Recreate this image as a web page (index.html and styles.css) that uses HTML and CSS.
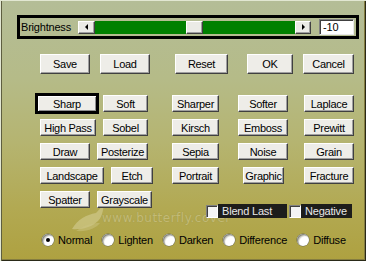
FILE: index.html
```html
<!DOCTYPE html>
<html>
<head>
<meta charset="utf-8">
<link rel="stylesheet" href="styles.css">
</head>
<body>
<div class="win">
  <div class="watermark">
    <svg class="leaf" width="40" height="30" viewBox="0 0 40 30">
      <path d="M2 26 C8 16 16 12 26 10 C30 6 33 2 34 1 C33 8 32 14 28 18 C22 24 12 27 2 26 Z" fill="#d4cd92" opacity="0.6"/>
      <path d="M6 28 C14 22 22 20 30 20 C26 25 18 29 6 28 Z" fill="#cbc382" opacity="0.5"/>
    </svg>
    <span class="wm-text">www.butterfly.cover</span>
  </div>

  <div class="bright">
    <span class="blabel">Brightness</span>
    <div class="scroll">
      <div class="arrow a-left"><span class="tri-left"></span></div>
      <div class="track">
        <div class="fill f-left"></div>
        <div class="thumb"></div>
        <div class="fill"></div>
      </div>
      <div class="arrow a-right"><span class="tri-right"></span></div>
    </div>
    <div class="tbox">-10</div>
  </div>

  <div class="actions">
    <button class="btn tall w50">Save</button>
    <button class="btn tall w50 m10">Load</button>
    <button class="btn tall w53 m25">Reset</button>
    <button class="btn tall w46 m19">OK</button>
    <button class="btn tall w51 m10">Cancel</button>
  </div>

  <div class="filters">
    <button class="btn focus w64 mneg5">Sharp</button>
    <button class="btn w45 m6">Soft</button>
    <button class="btn w47">Sharper</button>
    <button class="btn w50">Softer</button>
    <button class="btn w50">Laplace</button>

    <button class="btn w56">High Pass</button>
    <button class="btn w45 m6">Sobel</button>
    <button class="btn w47">Kirsch</button>
    <button class="btn w50">Emboss</button>
    <button class="btn w50">Prewitt</button>

    <button class="btn w50">Draw</button>
    <button class="btn w51">Posterize</button>
    <button class="btn w47">Sepia</button>
    <button class="btn w50">Noise</button>
    <button class="btn w50">Grain</button>

    <button class="btn w64">Landscape</button>
    <button class="btn w42 m14">Etch</button>
    <button class="btn w47">Portrait</button>
    <button class="btn w41 m5">Graphic</button>
    <button class="btn w50">Fracture</button>

    <button class="btn w50">Spatter</button>
    <button class="btn w55">Grayscale</button>
  </div>

  <div class="checks">
    <span class="cbox"></span><span class="strip s-blend">Blend Last</span>
    <span class="cbox c2"></span><span class="strip s-neg">Negative</span>
  </div>

  <div class="modes">
    <span class="mode"><span class="radio on"></span>Normal</span>
    <span class="mode"><span class="radio"></span>Lighten</span>
    <span class="mode"><span class="radio"></span>Darken</span>
    <span class="mode"><span class="radio"></span>Difference</span>
    <span class="mode"><span class="radio"></span>Diffuse</span>
  </div>
</div>
</body>
</html>
```

FILE: styles.css
```css
html, body {
  margin: 0;
  padding: 0;
}
body {
  width: 366px;
  height: 261px;
  overflow: hidden;
  font-family: "Liberation Sans", Arial, sans-serif;
  font-size: 11px;
  letter-spacing: -0.2px;
  color: #000;
}
.win {
  position: relative;
  z-index: 0;
  box-sizing: border-box;
  width: 366px;
  height: 261px;
  padding-top: 15px;
  background: linear-gradient(180deg, #b4bd97 0%, #b5bb88 30%, #b5b470 55%, #b2a952 80%, #aea140 100%);
  box-shadow: inset 1px 1px 0 #e2e7d2, inset 2px 0 0 #5e5e40, inset -1px -1px 0 #2a2a18, inset -2px -2px 0 #857d40;
}

/* Brightness */
.bright {
  box-sizing: border-box;
  margin-left: 17px;
  width: 342px;
  height: 24px;
  border: 3px solid #000;
  display: flex;
  align-items: center;
}
.blabel {
  box-sizing: border-box;
  width: 58px;
  padding-left: 1px;
}
.scroll {
  display: flex;
  height: 13px;
  width: 233px;
}
.arrow {
  box-sizing: border-box;
  width: 17px;
  height: 13px;
  background: #ebebe6;
  border: 1px solid;
  border-color: #fff #404040 #404040 #fff;
  box-shadow: inset -1px -1px 0 #a0a0a0;
  display: flex;
  align-items: center;
  justify-content: center;
}
.a-right { width: 16px; }
.tri-left {
  width: 0; height: 0;
  border-top: 3px solid transparent;
  border-bottom: 3px solid transparent;
  border-right: 3px solid #000;
}
.tri-right {
  width: 0; height: 0;
  border-top: 3px solid transparent;
  border-bottom: 3px solid transparent;
  border-left: 3px solid #000;
}
.track {
  display: flex;
  width: 200px;
  height: 13px;
}
.fill {
  flex: 1;
  background: #008000;
}
.f-left {
  flex: none;
  width: 91px;
}
.thumb {
  box-sizing: border-box;
  width: 17px;
  height: 13px;
  background: #ebebe6;
  border: 1px solid;
  border-color: #fff #404040 #404040 #fff;
  box-shadow: inset -1px -1px 0 #a0a0a0;
}
.tbox {
  box-sizing: border-box;
  margin-left: 8px;
  width: 35px;
  height: 16px;
  background: #fff;
  border: 1px solid;
  border-color: #808080 #e8e8e8 #e8e8e8 #808080;
  box-shadow: inset 1px 1px 0 #404040;
  padding-left: 3px;
  line-height: 14px;
}

/* Buttons */
.btn {
  box-sizing: border-box;
  height: 17px;
  margin: 0;
  padding: 0;
  background: #eeede8;
  border: 1px solid;
  border-color: #fff #404040 #404040 #fff;
  box-shadow: inset -1px -1px 0 #a0a0a0;
  font-family: "Liberation Sans", Arial, sans-serif;
  font-size: 11px;
  letter-spacing: -0.3px;
  color: #000;
  display: flex;
  align-items: center;
  justify-content: center;
  white-space: nowrap;
}
.btn.tall { height: 20px; }
.btn.focus {
  height: 21px;
  border: 3px solid #000;
  box-shadow: inset 1px 1px 0 #fff, inset -1px -1px 0 #909090;
}
.w41 { width: 41px; }
.w42 { width: 42px; }
.w45 { width: 45px; }
.w46 { width: 46px; }
.w47 { width: 47px; }
.w50 { width: 50px; }
.w51 { width: 51px; }
.w53 { width: 53px; }
.w55 { width: 55px; }
.w56 { width: 56px; }
.w64 { width: 64px; }
.m5 { margin-left: 5px; }
.m6 { margin-left: 6px; }
.m10 { margin-left: 10px; }
.m14 { margin-left: 14px; }
.m19 { margin-left: 19px; }
.m25 { margin-left: 25px; }
.mneg5 { margin-left: -5px; }

.actions {
  display: flex;
  margin-top: 15px;
  padding-left: 40px;
}
.filters {
  display: grid;
  grid-template-columns: 57px 75px 66px 66px 50px;
  grid-auto-rows: 17px;
  row-gap: 7px;
  align-items: center;
  margin-top: 21px;
  padding-left: 40px;
}

/* Checkboxes */
.checks {
  position: relative;
  z-index: 1;
  display: flex;
  align-items: center;
  height: 14px;
  margin-top: -4px;
  padding-left: 206px;
}
.cbox {
  box-sizing: border-box;
  width: 12px;
  height: 13px;
  background: #f4f4f4;
  border: 1px solid;
  border-color: #808080 #fff #fff #808080;
  box-shadow: inset 1px 1px 0 #404040;
}
.c2 { margin-left: 2px; }
.strip {
  box-sizing: border-box;
  height: 14px;
  background: #1d1d1b;
  color: #e8e8e8;
  line-height: 14px;
  padding-left: 4px;
}
.s-blend { width: 69px; }
.s-neg { width: 51px; }

/* Radios */
.modes {
  display: flex;
  align-items: center;
  gap: 10px;
  height: 14px;
  margin-top: 15px;
  padding-left: 42px;
}
.mode {
  display: flex;
  align-items: center;
  gap: 4px;
}
.radio {
  position: relative;
  box-sizing: border-box;
  width: 12px;
  height: 12px;
  border-radius: 50%;
  background: #fff;
  box-shadow: inset 1px 1px 0 #8a8a80, inset 2px 2px 1px #c8c8c0, 0 0 0 0.5px #6a6a50;
}
.radio.on::after {
  content: "";
  position: absolute;
  left: 4px;
  top: 4px;
  width: 4px;
  height: 4px;
  border-radius: 50%;
  background: #000;
}

/* Watermark */
.watermark {
  position: absolute;
  z-index: -1;
  left: 70px;
  top: 203px;
  display: flex;
  align-items: flex-start;
  pointer-events: none;
}
.wm-text {
  margin-top: 8px;
  margin-left: -8px;
  font-family: "DejaVu Sans", sans-serif;
  font-size: 12px;
  letter-spacing: 0.5px;
  color: #cfc890;
  text-shadow: 0 0 1px #8f8745;
  opacity: 0.6;
}
```
